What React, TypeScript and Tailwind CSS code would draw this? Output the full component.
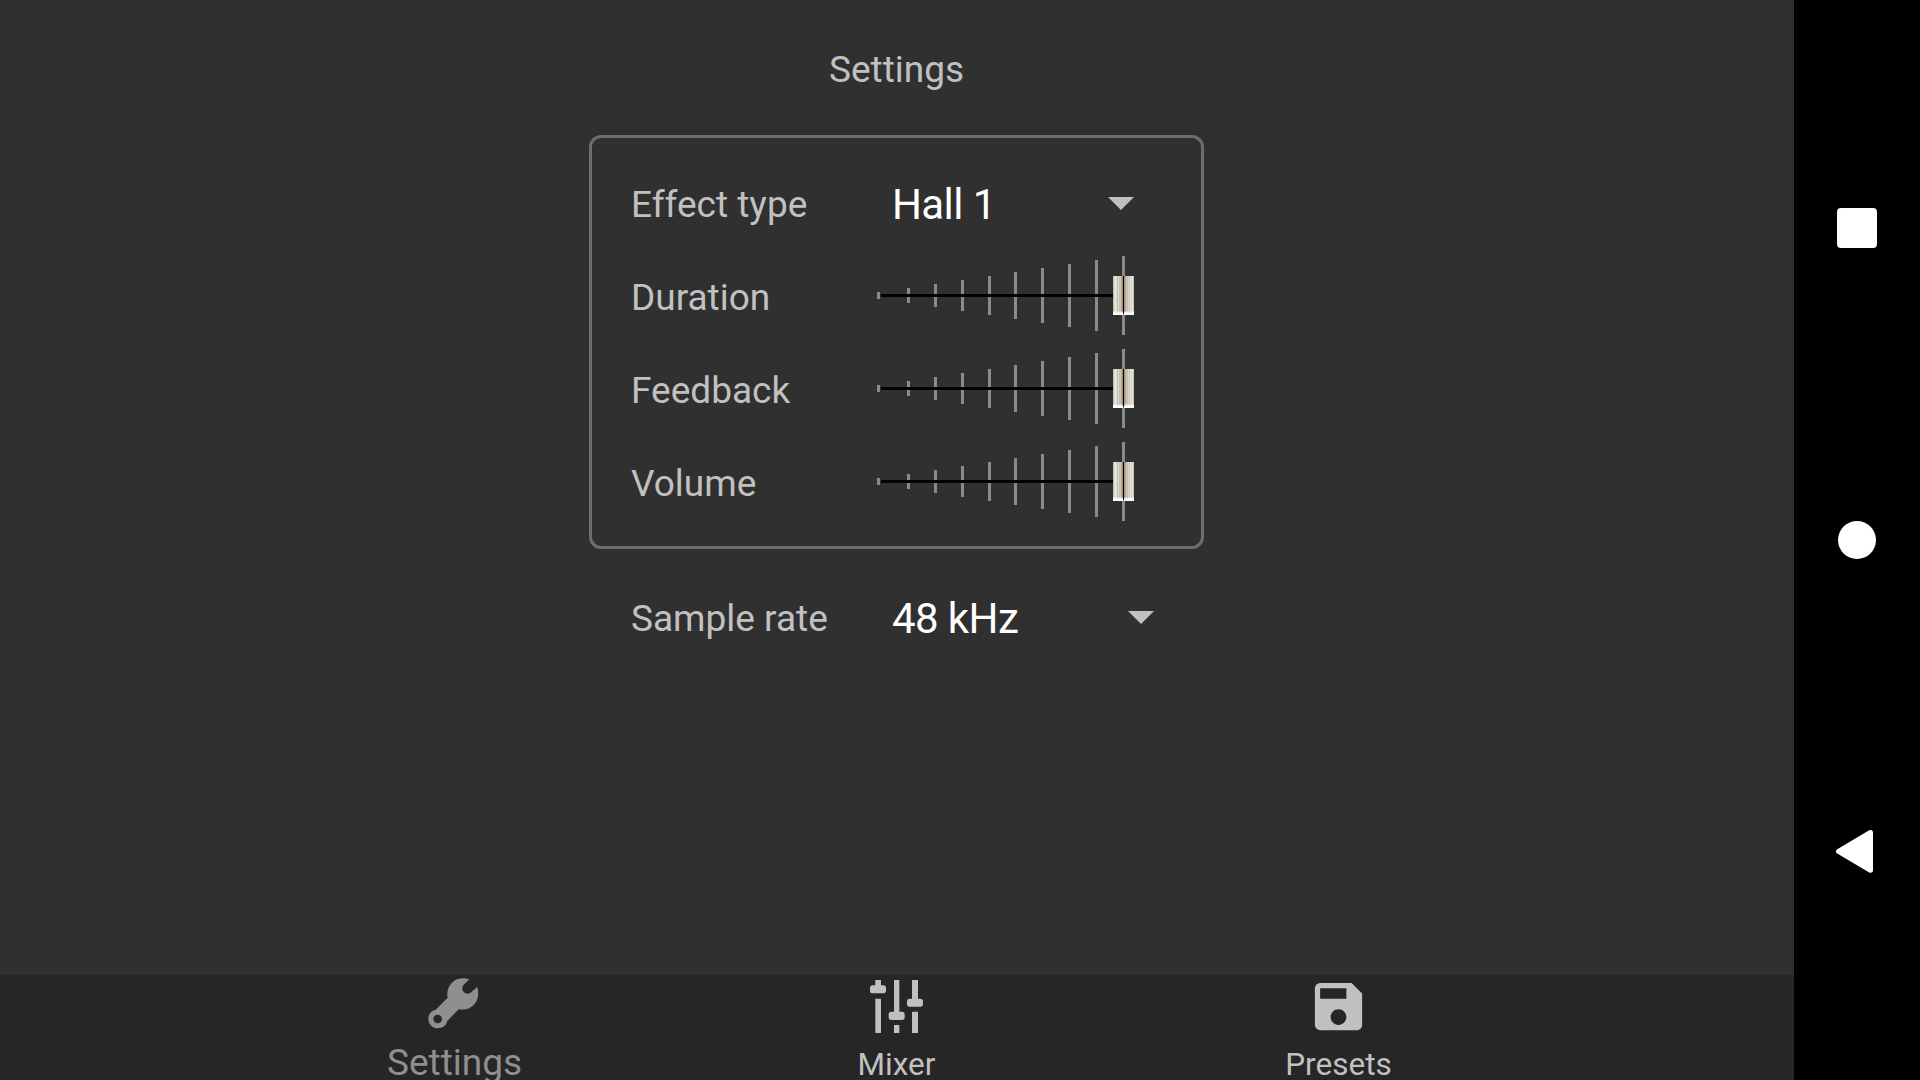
import React from "react";
import { MdSave } from "react-icons/md";

const TICKS = [0, 30, 57, 84, 111, 137, 164, 191, 218, 245];

const GROOVES = [
  "#c0bfac", "#dfddd0", "#e9e8dc", "#dedccf", "#c4bfae", "#dddbd0", "#c8c3b8",
  "#cbc6bc", "#b9ac9e", "#9c8570", "#000000", "#a8927e", "#bba692", "#cdc5ba",
  "#c6c0b4", "#dad7cb", "#c6c5b6", "#e4e4d9", "#d6d8c9", "#e4e5da", "#c3c6b3",
];

function Slider() {
  return (
    <svg width="260" height="93" viewBox="0 0 260 93" className="block shrink-0" shapeRendering="crispEdges">
      {TICKS.map((x, i) => {
        const half = i === 0 ? 3.5 : 3.5 + i * 4;
        return <rect key={x} x={x} y={46.5 - half} width="3" height={half * 2} fill="#8a8a8a" />;
      })}
      <rect x="4" y="45" width="232" height="3" fill="#000" />
      <g transform="translate(236 27)">
        {GROOVES.map((color, i) => (
          <rect key={i} x={i} width="1" height="38" fill={color} />
        ))}
        <rect x="0" y="35" width="10" height="1" fill="#fff" opacity="0.3" />
        <rect x="11" y="35" width="10" height="1" fill="#fff" opacity="0.3" />
        <rect x="0" y="36" width="10" height="1" fill="#fff" opacity="0.7" />
        <rect x="11" y="36" width="10" height="1" fill="#fff" opacity="0.7" />
        <rect x="0" y="37" width="10" height="2" fill="#fff" />
        <rect x="11" y="37" width="10" height="2" fill="#fff" />
        <rect x="10" y="38" width="1" height="1" fill="#8a8a8a" />
      </g>
    </svg>
  );
}

function Caret() {
  return (
    <svg width="26" height="13" viewBox="0 0 26 13" className="mt-[2px] block shrink-0">
      <path d="M0 0H26L13 13Z" fill="#c1c1c1" />
    </svg>
  );
}

function Wrench() {
  return (
    <svg width="54" height="54" viewBox="170 50 162 162" className="block">
      <path
        fill="#8f8f8d"
        fillRule="evenodd"
        d="M297 57L279 75C274 81 275 89 280 95C286 101 295 102 301 97L320 80C325 91 325 106 320 119C311 140 290 151 265 147L230 183C229 195 217 204 202 204C187 204 174 192 174 176C174 161 183 151 196 148L232 112C228 92 235 75 248 64C263 53 280 52 297 57ZM202 163a13 13 0 1 0 0 26a13 13 0 1 0 0-26Z"
      />
    </svg>
  );
}

function MixerIcon() {
  return (
    <svg width="53" height="53" viewBox="90 60 159 159" className="block" fill="#c0c0c0">
      <path d="M106 60h17v20h-17zM106 116h17v103h-17zM162 60h16v100h-16zM162 195h16v24h-16zM216 60h18v60h-18zM216 155h18v64h-18z" />
      <rect x="90" y="76" width="48" height="24" rx="8" />
      <rect x="146" y="155" width="48" height="25" rx="8" />
      <rect x="201" y="116" width="48" height="24" rx="8" />
    </svg>
  );
}

function SliderRow({ label }: { label: string }) {
  return (
    <div className="flex h-[93px] items-center">
      <span className="w-[246px] pt-[3px]">{label}</span>
      <Slider />
    </div>
  );
}

export default function App() {
  return (
    <div
      className="flex h-[1080px] w-[1920px] overflow-hidden bg-black text-[37px] leading-[43px] text-[#c1c1c1]"
      style={{ fontFamily: "Roboto, sans-serif" }}
    >
      <div className="flex w-[1794px] flex-col bg-[#303030]">
        <main className="flex h-[975px] w-[1793px] flex-col items-center">
          <h1 className="mt-[48px] h-[87px]">Settings</h1>
          <section className="h-[414px] w-[615px] rounded-[12px] border-[3px] border-[#6d6d6d] pl-[39px] pt-[18px]">
            <div className="flex h-[93px] items-center">
              <span className="w-[261px] pt-[3px]">Effect type</span>
              <span className="w-[216px] pt-[3px] text-[42px] leading-[49px] tracking-[-0.6px] text-white">Hall 1</span>
              <Caret />
            </div>
            <SliderRow label="Duration" />
            <SliderRow label="Feedback" />
            <SliderRow label="Volume" />
          </section>
          <div className="mt-[21px] flex h-[93px] w-[615px] items-center pl-[42px]">
            <span className="w-[261px] pt-[3px]">Sample rate</span>
            <span className="w-[236px] pt-[3px] text-[42px] leading-[49px] tracking-[-0.6px] text-white">48 kHz</span>
            <Caret />
          </div>
        </main>
        <nav className="flex h-[105px] justify-center bg-[#262626] pr-[2px]">
          <div className="flex w-[442px] flex-col items-center text-[#8f8f8d]">
            <div className="flex h-[63px] shrink-0 pt-[2px]">
              <Wrench />
            </div>
            <span className="mt-[3px] ml-px">Settings</span>
          </div>
          <div className="flex w-[442px] flex-col items-center text-[31.5px] leading-[37px]">
            <div className="flex h-[63px] shrink-0 pt-[5px]">
              <MixerIcon />
            </div>
            <span className="mt-[8px] ml-px">Mixer</span>
          </div>
          <div className="flex w-[442px] flex-col items-center text-[31.5px] leading-[37px]">
            <div className="flex h-[63px] shrink-0">
              <MdSave size={63} color="#c0c0c0" />
            </div>
            <span className="mt-[8px] ml-px">Presets</span>
          </div>
        </nav>
      </div>
      <aside className="flex w-[126px] flex-col items-center">
        <div className="mt-[208px] size-[40px] rounded-[4px] bg-white" />
        <div className="mt-[272.5px] size-[38.5px] rounded-full bg-white" />
        <svg width="37" height="43" viewBox="0 0 37 43" className="mt-[270.5px] mr-[5px] block">
          <path d="M2.5 21.4L34.5 2.5V40.3Z" fill="#fff" stroke="#fff" strokeWidth="5" strokeLinejoin="round" />
        </svg>
      </aside>
    </div>
  );
}
